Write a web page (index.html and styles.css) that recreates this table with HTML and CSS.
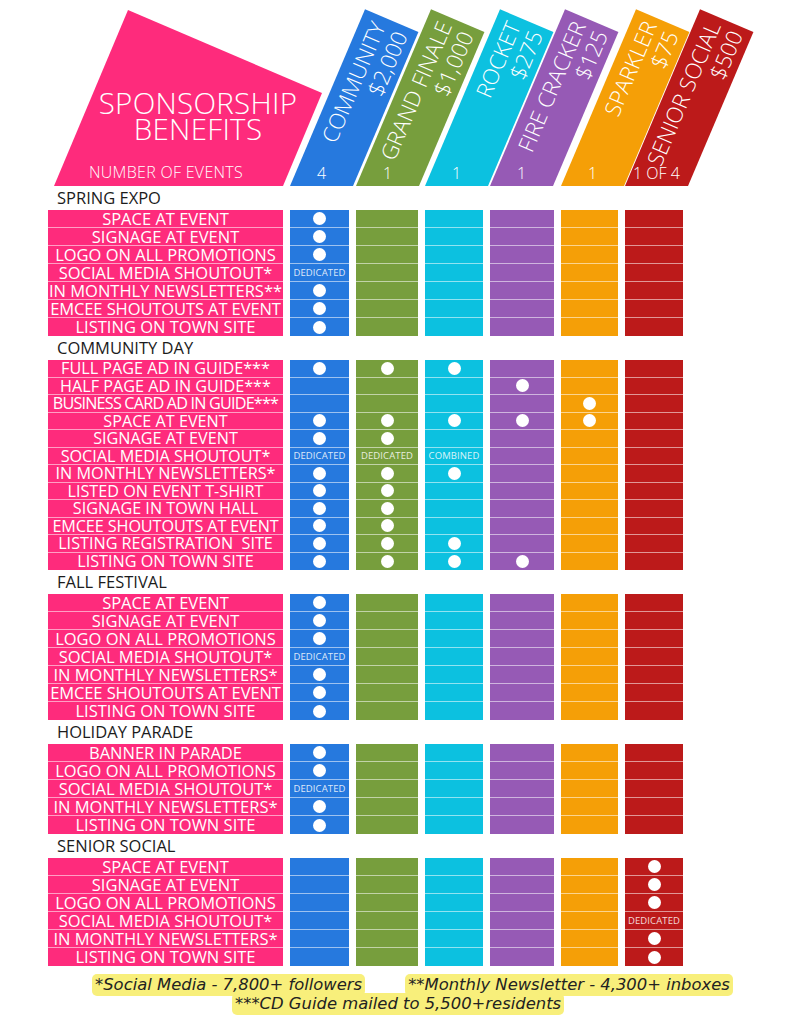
FILE: index.html
```html
<!DOCTYPE html>
<html lang="en">
<head>
<meta charset="utf-8">
<title>Sponsorship Benefits</title>
<link rel="stylesheet" href="styles.css">
</head>
<body>
<div class="page">
  <header class="head">
    <div class="hpink">
      <div class="pinkshape">
        <div class="ptitle">SPONSORSHIP<br>BENEFITS</div>
        <div class="pnum">NUMBER OF EVENTS</div>
      </div>
    </div>
    <div class="hcol"><div class="band b"><div class="bt">COMMUNITY<br>$2,000</div></div><div class="num">4</div></div>
    <div class="hcol"><div class="band g"><div class="bt">GRAND FINALE<br>$1,000</div></div><div class="num">1</div></div>
    <div class="hcol"><div class="band c"><div class="bt">ROCKET<br>$275</div></div><div class="num">1</div></div>
    <div class="hcol"><div class="band p"><div class="bt">FIRE CRACKER<br>$125</div></div><div class="num">1</div></div>
    <div class="hcol"><div class="band o"><div class="bt">SPARKLER<br>$75</div></div><div class="num">1</div></div>
    <div class="hcol"><div class="band r"><div class="bt">SENIOR SOCIAL<br>$500</div></div><div class="num">1 OF 4</div></div>
  </header>

  <section class="sec">
    <h2 class="stitle">SPRING EXPO</h2>
    <div class="grid">
      <div class="lbl">SPACE AT EVENT</div><div class="b"><i class="dot"></i></div><div class="g"></div><div class="c"></div><div class="p"></div><div class="o"></div><div class="r"></div>
      <div class="lbl">SIGNAGE AT EVENT</div><div class="b"><i class="dot"></i></div><div class="g"></div><div class="c"></div><div class="p"></div><div class="o"></div><div class="r"></div>
      <div class="lbl">LOGO ON ALL PROMOTIONS</div><div class="b"><i class="dot"></i></div><div class="g"></div><div class="c"></div><div class="p"></div><div class="o"></div><div class="r"></div>
      <div class="lbl">SOCIAL MEDIA SHOUTOUT*</div><div class="b"><span class="tag">DEDICATED</span></div><div class="g"></div><div class="c"></div><div class="p"></div><div class="o"></div><div class="r"></div>
      <div class="lbl">IN MONTHLY NEWSLETTERS**</div><div class="b"><i class="dot"></i></div><div class="g"></div><div class="c"></div><div class="p"></div><div class="o"></div><div class="r"></div>
      <div class="lbl wide">EMCEE SHOUTOUTS AT EVENT</div><div class="b"><i class="dot"></i></div><div class="g"></div><div class="c"></div><div class="p"></div><div class="o"></div><div class="r"></div>
      <div class="lbl">LISTING ON TOWN SITE</div><div class="b"><i class="dot"></i></div><div class="g"></div><div class="c"></div><div class="p"></div><div class="o"></div><div class="r"></div>
    </div>
  </section>

  <section class="sec">
    <h2 class="stitle">COMMUNITY DAY</h2>
    <div class="grid tight">
      <div class="lbl">FULL PAGE AD IN GUIDE***</div><div class="b"><i class="dot"></i></div><div class="g"><i class="dot"></i></div><div class="c"><i class="dot"></i></div><div class="p"></div><div class="o"></div><div class="r"></div>
      <div class="lbl">HALF PAGE AD IN GUIDE***</div><div class="b"></div><div class="g"></div><div class="c"></div><div class="p"><i class="dot"></i></div><div class="o"></div><div class="r"></div>
      <div class="lbl fit">BUSINESS CARD AD IN GUIDE***</div><div class="b"></div><div class="g"></div><div class="c"></div><div class="p"></div><div class="o"><i class="dot"></i></div><div class="r"></div>
      <div class="lbl">SPACE AT EVENT</div><div class="b"><i class="dot"></i></div><div class="g"><i class="dot"></i></div><div class="c"><i class="dot"></i></div><div class="p"><i class="dot"></i></div><div class="o"><i class="dot"></i></div><div class="r"></div>
      <div class="lbl">SIGNAGE AT EVENT</div><div class="b"><i class="dot"></i></div><div class="g"><i class="dot"></i></div><div class="c"></div><div class="p"></div><div class="o"></div><div class="r"></div>
      <div class="lbl">SOCIAL MEDIA SHOUTOUT*</div><div class="b"><span class="tag">DEDICATED</span></div><div class="g"><span class="tag">DEDICATED</span></div><div class="c"><span class="tag">COMBINED</span></div><div class="p"></div><div class="o"></div><div class="r"></div>
      <div class="lbl">IN MONTHLY NEWSLETTERS*</div><div class="b"><i class="dot"></i></div><div class="g"><i class="dot"></i></div><div class="c"><i class="dot"></i></div><div class="p"></div><div class="o"></div><div class="r"></div>
      <div class="lbl">LISTED ON EVENT T-SHIRT</div><div class="b"><i class="dot"></i></div><div class="g"><i class="dot"></i></div><div class="c"></div><div class="p"></div><div class="o"></div><div class="r"></div>
      <div class="lbl">SIGNAGE IN TOWN HALL</div><div class="b"><i class="dot"></i></div><div class="g"><i class="dot"></i></div><div class="c"></div><div class="p"></div><div class="o"></div><div class="r"></div>
      <div class="lbl wide">EMCEE SHOUTOUTS AT EVENT</div><div class="b"><i class="dot"></i></div><div class="g"><i class="dot"></i></div><div class="c"></div><div class="p"></div><div class="o"></div><div class="r"></div>
      <div class="lbl">LISTING REGISTRATION&nbsp; SITE</div><div class="b"><i class="dot"></i></div><div class="g"><i class="dot"></i></div><div class="c"><i class="dot"></i></div><div class="p"></div><div class="o"></div><div class="r"></div>
      <div class="lbl">LISTING ON TOWN SITE</div><div class="b"><i class="dot"></i></div><div class="g"><i class="dot"></i></div><div class="c"><i class="dot"></i></div><div class="p"><i class="dot"></i></div><div class="o"></div><div class="r"></div>
    </div>
  </section>

  <section class="sec">
    <h2 class="stitle">FALL FESTIVAL</h2>
    <div class="grid">
      <div class="lbl">SPACE AT EVENT</div><div class="b"><i class="dot"></i></div><div class="g"></div><div class="c"></div><div class="p"></div><div class="o"></div><div class="r"></div>
      <div class="lbl">SIGNAGE AT EVENT</div><div class="b"><i class="dot"></i></div><div class="g"></div><div class="c"></div><div class="p"></div><div class="o"></div><div class="r"></div>
      <div class="lbl">LOGO ON ALL PROMOTIONS</div><div class="b"><i class="dot"></i></div><div class="g"></div><div class="c"></div><div class="p"></div><div class="o"></div><div class="r"></div>
      <div class="lbl">SOCIAL MEDIA SHOUTOUT*</div><div class="b"><span class="tag">DEDICATED</span></div><div class="g"></div><div class="c"></div><div class="p"></div><div class="o"></div><div class="r"></div>
      <div class="lbl">IN MONTHLY NEWSLETTERS*</div><div class="b"><i class="dot"></i></div><div class="g"></div><div class="c"></div><div class="p"></div><div class="o"></div><div class="r"></div>
      <div class="lbl wide">EMCEE SHOUTOUTS AT EVENT</div><div class="b"><i class="dot"></i></div><div class="g"></div><div class="c"></div><div class="p"></div><div class="o"></div><div class="r"></div>
      <div class="lbl">LISTING ON TOWN SITE</div><div class="b"><i class="dot"></i></div><div class="g"></div><div class="c"></div><div class="p"></div><div class="o"></div><div class="r"></div>
    </div>
  </section>

  <section class="sec">
    <h2 class="stitle">HOLIDAY PARADE</h2>
    <div class="grid">
      <div class="lbl">BANNER IN PARADE</div><div class="b"><i class="dot"></i></div><div class="g"></div><div class="c"></div><div class="p"></div><div class="o"></div><div class="r"></div>
      <div class="lbl">LOGO ON ALL PROMOTIONS</div><div class="b"><i class="dot"></i></div><div class="g"></div><div class="c"></div><div class="p"></div><div class="o"></div><div class="r"></div>
      <div class="lbl">SOCIAL MEDIA SHOUTOUT*</div><div class="b"><span class="tag">DEDICATED</span></div><div class="g"></div><div class="c"></div><div class="p"></div><div class="o"></div><div class="r"></div>
      <div class="lbl">IN MONTHLY NEWSLETTERS*</div><div class="b"><i class="dot"></i></div><div class="g"></div><div class="c"></div><div class="p"></div><div class="o"></div><div class="r"></div>
      <div class="lbl">LISTING ON TOWN SITE</div><div class="b"><i class="dot"></i></div><div class="g"></div><div class="c"></div><div class="p"></div><div class="o"></div><div class="r"></div>
    </div>
  </section>

  <section class="sec">
    <h2 class="stitle">SENIOR SOCIAL</h2>
    <div class="grid">
      <div class="lbl">SPACE AT EVENT</div><div class="b"></div><div class="g"></div><div class="c"></div><div class="p"></div><div class="o"></div><div class="r"><i class="dot"></i></div>
      <div class="lbl">SIGNAGE AT EVENT</div><div class="b"></div><div class="g"></div><div class="c"></div><div class="p"></div><div class="o"></div><div class="r"><i class="dot"></i></div>
      <div class="lbl">LOGO ON ALL PROMOTIONS</div><div class="b"></div><div class="g"></div><div class="c"></div><div class="p"></div><div class="o"></div><div class="r"><i class="dot"></i></div>
      <div class="lbl">SOCIAL MEDIA SHOUTOUT*</div><div class="b"></div><div class="g"></div><div class="c"></div><div class="p"></div><div class="o"></div><div class="r"><span class="tag">DEDICATED</span></div>
      <div class="lbl">IN MONTHLY NEWSLETTERS*</div><div class="b"></div><div class="g"></div><div class="c"></div><div class="p"></div><div class="o"></div><div class="r"><i class="dot"></i></div>
      <div class="lbl">LISTING ON TOWN SITE</div><div class="b"></div><div class="g"></div><div class="c"></div><div class="p"></div><div class="o"></div><div class="r"><i class="dot"></i></div>
    </div>
  </section>

  <footer class="notes">
    <div class="nline1">
      <span class="hl">*Social Media - 7,800+ followers</span>
      <span class="hl">**Monthly Newsletter - 4,300+ inboxes</span>
    </div>
    <div class="nline2">
      <span class="hl">***CD Guide mailed to 5,500+residents</span>
    </div>
  </footer>
</div>
</body>
</html>
```

FILE: styles.css
```css
:root {
  --pink: #fe2b7c;
  --blue: #2679de;
  --green: #779e3d;
  --cyan: #0cc1e0;
  --purple: #965ab5;
  --orange: #f59f07;
  --red: #bc1a1a;
  --cols: 235px 59px 62px 58px 64px 57px 58px;
}

* { box-sizing: border-box; }

body {
  margin: 0;
  background: #fff;
  font-family: "Open Sans", "DejaVu Sans", sans-serif;
  color: #1c1c1c;
}

.page {
  width: 791px;
}

/* ---------- header ---------- */
.head {
  display: grid;
  grid-template-columns: var(--cols);
  grid-template-rows: 186px;
  column-gap: 7px;
  height: 186px;
  padding-left: 48px;
  overflow: hidden;
}

.pinkshape {
  width: 275px;
  height: 186px;
  background: var(--pink);
  clip-path: polygon(80px 10px, 274px 93px, 235px 186px, 6px 186px);
  color: #fff;
  font-weight: 300;
  display: flex;
  flex-direction: column;
}

.ptitle {
  width: 300px;
  padding-top: 90px;
  text-align: center;
  font-size: 29.5px;
  line-height: 26px;
  letter-spacing: 0.3px;
}

.pnum {
  width: 236px;
  margin-top: 22px;
  text-align: center;
  font-size: 16px;
  line-height: 16px;
  letter-spacing: 0.3px;
}

.hcol {
  display: grid;
  grid-template-rows: 186px;
  height: 186px;
}

.band, .num {
  grid-area: 1 / 1;
}

.band {
  align-self: end;
  width: 58px;
  height: 192px;
  transform-origin: 0 100%;
  transform: rotate(23deg);
}

.bt {
  width: 100%;
  height: 100%;
  writing-mode: vertical-rl;
  transform: rotate(180deg);
  text-align: end;
  white-space: nowrap;
  color: #fff;
  font-weight: 300;
  font-size: 22px;
  line-height: 24px;
  padding: 0 5px 7px 0;
}

.num {
  position: relative;
  z-index: 1;
  align-self: end;
  justify-self: start;
  width: 63px;
  text-align: center;
  color: #fff;
  font-weight: 300;
  font-size: 16px;
  line-height: 18px;
  margin-bottom: 4px;
  white-space: nowrap;
}

/* ---------- colors ---------- */
.b { background: var(--blue); }
.g { background: var(--green); }
.c { background: var(--cyan); }
.p { background: var(--purple); }
.o { background: var(--orange); }
.r { background: var(--red); }

/* ---------- sections ---------- */
.stitle {
  margin: 0;
  height: 24px;
  padding-left: 57px;
  font-size: 16.5px;
  line-height: 24px;
  font-weight: 400;
  color: #1c1c1c;
}

.grid {
  display: grid;
  grid-template-columns: var(--cols);
  grid-auto-rows: 18px;
  column-gap: 7px;
  padding-left: 48px;
}

.grid.tight { grid-auto-rows: 17.5px; }

.grid > div {
  display: flex;
  align-items: center;
  justify-content: center;
  border-bottom: 1px solid rgba(255, 255, 255, 0.55);
}

.grid > div:nth-last-child(-n+7) { border-bottom: 0; }

.lbl {
  background: var(--pink);
  color: #fff;
  font-size: 16.5px;
  line-height: 16px;
  white-space: nowrap;
}

.tight .lbl { font-size: 16.2px; }

.lbl.wide { letter-spacing: -0.1px; }
.lbl.fit { letter-spacing: -0.8px; }

.dot {
  display: block;
  width: 13px;
  height: 13px;
  border-radius: 50%;
  background: #fff;
}

.tag {
  font-size: 9.5px;
  line-height: 12px;
  color: rgba(255, 255, 255, 0.85);
  white-space: nowrap;
  letter-spacing: 0.1px;
}

/* ---------- footnotes ---------- */
.notes {
  padding-top: 8px;
  font-family: "DejaVu Sans", "Open Sans", sans-serif;
  font-style: italic;
  font-size: 16.4px;
  color: #222;
}

.hl {
  display: inline-block;
  background: #f8ef7b;
  border-radius: 5px;
  padding: 0 3px;
  height: 22px;
  line-height: 22px;
  white-space: nowrap;
}

.nline1 {
  display: flex;
  gap: 40px;
  padding-left: 92px;
}

.nline2 {
  padding-left: 232px;
  margin-top: -3px;
}
```
